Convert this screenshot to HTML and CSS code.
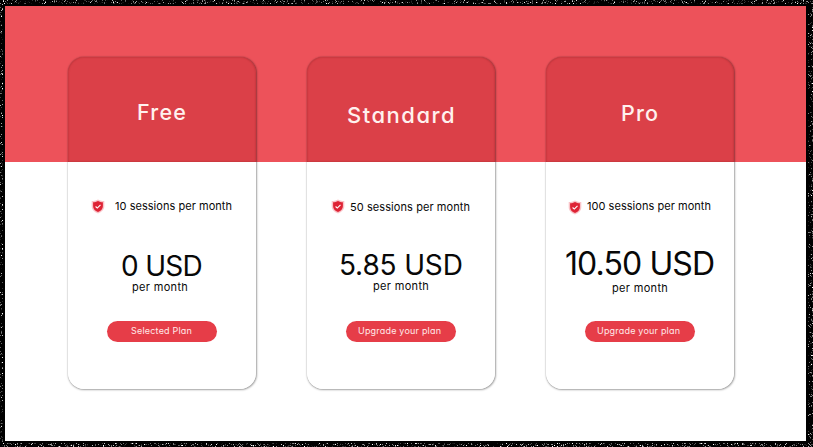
FILE: index.html
```
<!DOCTYPE html>
<html lang="en">
<head>
<meta charset="utf-8">
<title>Plans</title>
<link rel="stylesheet" href="styles.css">
</head>
<body>
<svg class="defs" width="0" height="0" aria-hidden="true">
  <symbol id="shield" viewBox="0 0 14 15">
    <path d="M7 .5C5 1.700 3 2.100.7 2.100v5.200c0 3.400 2.400 5.600 6.300 7.200 3.900-1.600 6.300-3.800 6.300-7.200V2.100C11 2.100 9 1.700 7 .5z" fill="#f9c3c8"/>
    <path d="M7 2C5.400 2.900 3.900 3.200 2.100 3.200v4c0 2.700 1.900 4.500 4.900 5.800 3-1.300 4.900-3.100 4.900-5.800v-4C10.100 3.200 8.600 2.900 7 2z" fill="#de2335"/>
    <path d="M4.600 7.500l1.700 1.600 3.200-3.300" fill="none" stroke="#fff" stroke-width="1.100"/>
  </symbol>
</svg>
<main class="screen">
  <svg class="grain" width="813" height="447" aria-hidden="true">
    <filter id="noise" x="0" y="0" width="100%" height="100%" color-interpolation-filters="sRGB">
      <feTurbulence type="fractalNoise" baseFrequency="0.9" numOctaves="2" seed="4"/>
      <feColorMatrix values="5 0 0 0 -2.950  5 0 0 0 -2.950  5 0 0 0 -2.950  0 0 0 0 1"/>
    </filter>
    <rect width="813" height="447" filter="url(#noise)"/>
  </svg>
  <div class="frame">
    <section class="plans">
      <article class="card free">
        <header class="head"><h2>Free</h2></header>
        <div class="feature"><svg class="icon"><use href="#shield"/></svg><span>10 sessions per month</span></div>
        <div class="price">0 USD</div>
        <div class="period">per month</div>
        <button class="btn"><span>Selected Plan</span></button>
      </article>
      <article class="card standard">
        <header class="head"><h2>Standard</h2></header>
        <div class="feature"><svg class="icon"><use href="#shield"/></svg><span>50 sessions per month</span></div>
        <div class="price">5.85 USD</div>
        <div class="period">per month</div>
        <button class="btn"><span>Upgrade your plan</span></button>
      </article>
      <article class="card pro">
        <header class="head"><h2>Pro</h2></header>
        <div class="feature"><svg class="icon"><use href="#shield"/></svg><span>100 sessions per month</span></div>
        <div class="price">10.50 USD</div>
        <div class="period">per month</div>
        <button class="btn"><span>Upgrade your plan</span></button>
      </article>
    </section>
  </div>
</main>
</body>
</html>
```
FILE: styles.css
```
* { box-sizing: border-box; }
body {
  margin: 0;
  font-family: Inter, "Liberation Sans", sans-serif;
  font-feature-settings: "cv11", "ss03";
  color: #080808;
}
.defs { position: absolute; }
.screen {
  position: relative;
  width: 813px;
  height: 447px;
  padding: 6px 7px 6px 5px;
  background: #000;
  overflow: hidden;
}
.grain { position: absolute; inset: 0; }
.frame {
  position: relative;
  height: 435px;
  background: linear-gradient(#ed525a 156px, #fff 156px);
  box-shadow: 0 0 0 2px #000;
}
.plans { display: flex; gap: 51px; padding: 51px 0 0 63px; }
.card {
  width: 188px;
  height: 332px;
  border-radius: 16px;
  box-shadow: 0 0 1px rgba(0,0,0,.25), .5px .5px 2px rgba(0,0,0,.35);
  background: linear-gradient(#db4048 105px, #fff 105px);
  white-space: nowrap;
}
.head {
  height: 105px;
  border-radius: 16px 16px 0 0;
  box-shadow: inset 0 0 2px rgba(90,0,0,.4);
}
h2 {
  margin: 0;
  padding-top: 41px;
  font-size: 21.500px;
  line-height: 28px;
  font-weight: 500;
  letter-spacing: 1.200px;
  color: #fff1ee;
}
.feature { display: flex; align-items: center; height: 16px; margin-top: 36px; font-size: 11px; letter-spacing: .04px; }
.icon { width: 14px; height: 15px; flex: none; }
.price { height: 26px; line-height: 26px; margin-top: 39px; font-size: 28px; }
.period { height: 12px; line-height: 12px; font-size: 11px; letter-spacing: .33px; }
.btn {
  display: block;
  width: 110px;
  height: 21px;
  margin: 0;
  padding: 0 0 2px;
  border: 0;
  border-radius: 11px;
  background: #e63d48;
  color: #ffe9e8;
  font: 9px/19px Inter, "Liberation Sans", sans-serif;
  font-feature-settings: inherit;
  letter-spacing: .2px;
  text-align: left;
}

.free h2 { padding-left: 69px; }
.free .feature { padding-left: 23px; gap: 10px; }
.free .price { padding-left: 53px; letter-spacing: -.7px; }
.free .period { padding-left: 64px; margin-top: 2px; }
.free .btn { margin: 28px 0 0 39px; padding-left: 24px; }

.standard h2 { padding: 44px 0 0 40px; font-size: 22px; letter-spacing: 1.500px; }
.standard .feature { padding-left: 24px; gap: 5px; letter-spacing: .08px; }
.standard .feature span { padding-top: 1px; }
.standard .price { padding-left: 32px; margin-top: 38px; letter-spacing: -.15px; }
.standard .period { padding-left: 66px; margin-top: 2px; }
.standard .btn { margin: 29px 0 0 39px; padding-left: 12px; }

.pro h2 { padding: 42px 0 0 75px; }
.pro .feature { padding-left: 22px; gap: 5px; }
.pro .icon { margin-top: 2px; }
.pro .price { padding-left: 19px; margin-top: 37px; font-size: 32px; letter-spacing: -.9px; }
.pro .period { padding-left: 66px; margin-top: 5px; }
.pro .btn { margin: 27px 0 0 39px; padding-left: 12px; }
```
